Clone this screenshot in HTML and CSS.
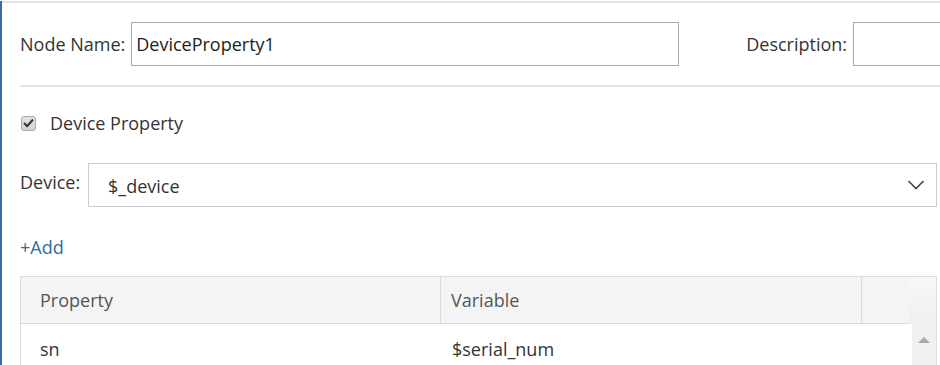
FILE: index.html
```html
<!DOCTYPE html>
<html>
<head>
<meta charset="utf-8">
<link rel="stylesheet" href="styles.css">
</head>
<body>
<div class="panel">
  <div class="topline"></div>
  <div class="content">
    <div class="name-row">
      <label class="lbl">Node Name:</label>
      <div class="textbox name-box">DeviceProperty1</div>
      <label class="lbl desc-lbl">Description:</label>
      <div class="textbox desc-box"></div>
    </div>
    <div class="divider"></div>
    <div class="check-row">
      <span class="checkbox">
        <svg width="15" height="15" viewBox="0 0 15 15">
          <defs>
            <linearGradient id="cb" x1="0" y1="0" x2="0" y2="1">
              <stop offset="0" stop-color="#e4e4e4"/>
              <stop offset="1" stop-color="#d2d2d2"/>
            </linearGradient>
          </defs>
          <rect x="0.5" y="0.5" width="14" height="14" rx="2.5" fill="url(#cb)" stroke="#a9a9a9"/>
          <path d="M3.6 7.6 L6.1 10.2 L11.4 4.2" fill="none" stroke="#3c3c3c" stroke-width="2.2" stroke-linecap="round" stroke-linejoin="round"/>
        </svg>
      </span>
      <span class="check-label">Device Property</span>
    </div>
    <div class="device-row">
      <label class="lbl device-lbl">Device:</label>
      <div class="select">
        <span class="select-value">$_device</span>
        <svg class="chevron" width="18" height="12" viewBox="0 0 18 12">
          <path d="M1.5 2 L9 9.5 L16.5 2" fill="none" stroke="#444" stroke-width="1.6"/>
        </svg>
      </div>
    </div>
    <a class="add-link">+Add</a>
    <div class="grid">
      <div class="grid-main">
        <div class="grid-head">
          <div class="hcell">Property</div>
          <div class="hcell">Variable</div>
          <div class="hcell hcell-last"></div>
        </div>
        <div class="grid-row">
          <div class="cell">sn</div>
          <div class="cell">$serial_num</div>
        </div>
      </div>
      <div class="scrollbar">
        <div class="scroll-head"></div>
        <div class="scroll-track">
          <svg class="arrow-up" width="12" height="6" viewBox="0 0 12 6">
            <path d="M0 6 L6 0 L12 6 Z" fill="#a8a8a8"/>
          </svg>
        </div>
      </div>
    </div>
  </div>
</div>
</body>
</html>
```

FILE: styles.css
```css
html, body {
  margin: 0;
  padding: 0;
  background: #ffffff;
  overflow: hidden;
}

body {
  font-family: "Open Sans", "Noto Sans", sans-serif;
  font-size: 18px;
  color: #333333;
  width: 940px;
  height: 365px;
}

.panel {
  border-left: 2px solid #3a6da6;
  height: 365px;
  box-sizing: border-box;
}

.topline {
  margin-top: 1px;
  height: 2px;
  background: #e6e6e6;
}

.content {
  padding-left: 18px;
}

.name-row {
  display: flex;
  align-items: center;
  margin-top: 19px;
  white-space: nowrap;
}

.lbl {
  color: #333333;
  line-height: 24px;
}

.textbox {
  box-sizing: border-box;
  height: 44px;
  border: 1px solid #a9a9a9;
  background: #ffffff;
  line-height: 42px;
  padding-left: 4px;
  color: #222222;
  flex: none;
}

.name-box {
  width: 548px;
  margin-left: 6px;
}

.desc-lbl {
  margin-left: 67px;
}

.desc-box {
  width: 120px;
  margin-left: 6px;
}

.divider {
  margin-top: 19px;
  height: 2px;
  background: #e4e4e4;
}

.check-row {
  display: flex;
  align-items: center;
  margin-top: 24px;
  height: 24px;
}

.checkbox {
  display: flex;
  width: 15px;
  height: 15px;
  margin-left: 1px;
}

.check-label {
  margin-left: 14px;
  line-height: 24px;
}

.device-row {
  display: flex;
  align-items: flex-start;
  margin-top: 28px;
  margin-right: 3px;
}

.device-lbl {
  width: 68px;
  flex: none;
  padding-top: 7px;
}

.select {
  flex: 1;
  box-sizing: border-box;
  height: 44px;
  border: 1px solid #cccccc;
  display: flex;
  align-items: center;
  justify-content: space-between;
  padding-left: 19px;
  padding-right: 11px;
}

.select-value {
  line-height: 24px;
  color: #333333;
  padding-top: 2px;
}

.chevron {
  display: block;
}

.add-link {
  display: block;
  margin-top: 28px;
  line-height: 24px;
  color: #2e6ca4;
  width: max-content;
}

.grid {
  display: flex;
  margin-top: 17px;
  margin-right: 3px;
  border: 1px solid #dcdcdc;
  height: 100px;
}

.grid-main {
  flex: 1;
}

.grid-head {
  display: grid;
  grid-template-columns: 420px 421px 1fr;
  height: 46px;
  background: #f4f4f4;
  border-bottom: 1px solid #d8d8d8;
}

.hcell {
  border-right: 1px solid #dcdcdc;
  padding-left: 19px;
  line-height: 46px;
  color: #555555;
}

.hcell + .hcell {
  padding-left: 10px;
}

.hcell-last {
  border-right: none;
}

.grid-row {
  display: grid;
  grid-template-columns: 420px 1fr;
  height: 50px;
  align-items: center;
}

.cell {
  padding-left: 19px;
  line-height: 24px;
  color: #333333;
}

.cell + .cell {
  padding-left: 11px;
}

.scrollbar {
  width: 27px;
  display: flex;
  flex-direction: column;
}

.scroll-head {
  height: 47px;
  background: linear-gradient(#f8f8f8, #eeeeee);
}

.scroll-track {
  flex: 1;
  background: #f0f0f0;
  margin-left: 3px;
  display: flex;
  justify-content: center;
  padding-top: 13px;
}

.arrow-up {
  display: block;
}
```
